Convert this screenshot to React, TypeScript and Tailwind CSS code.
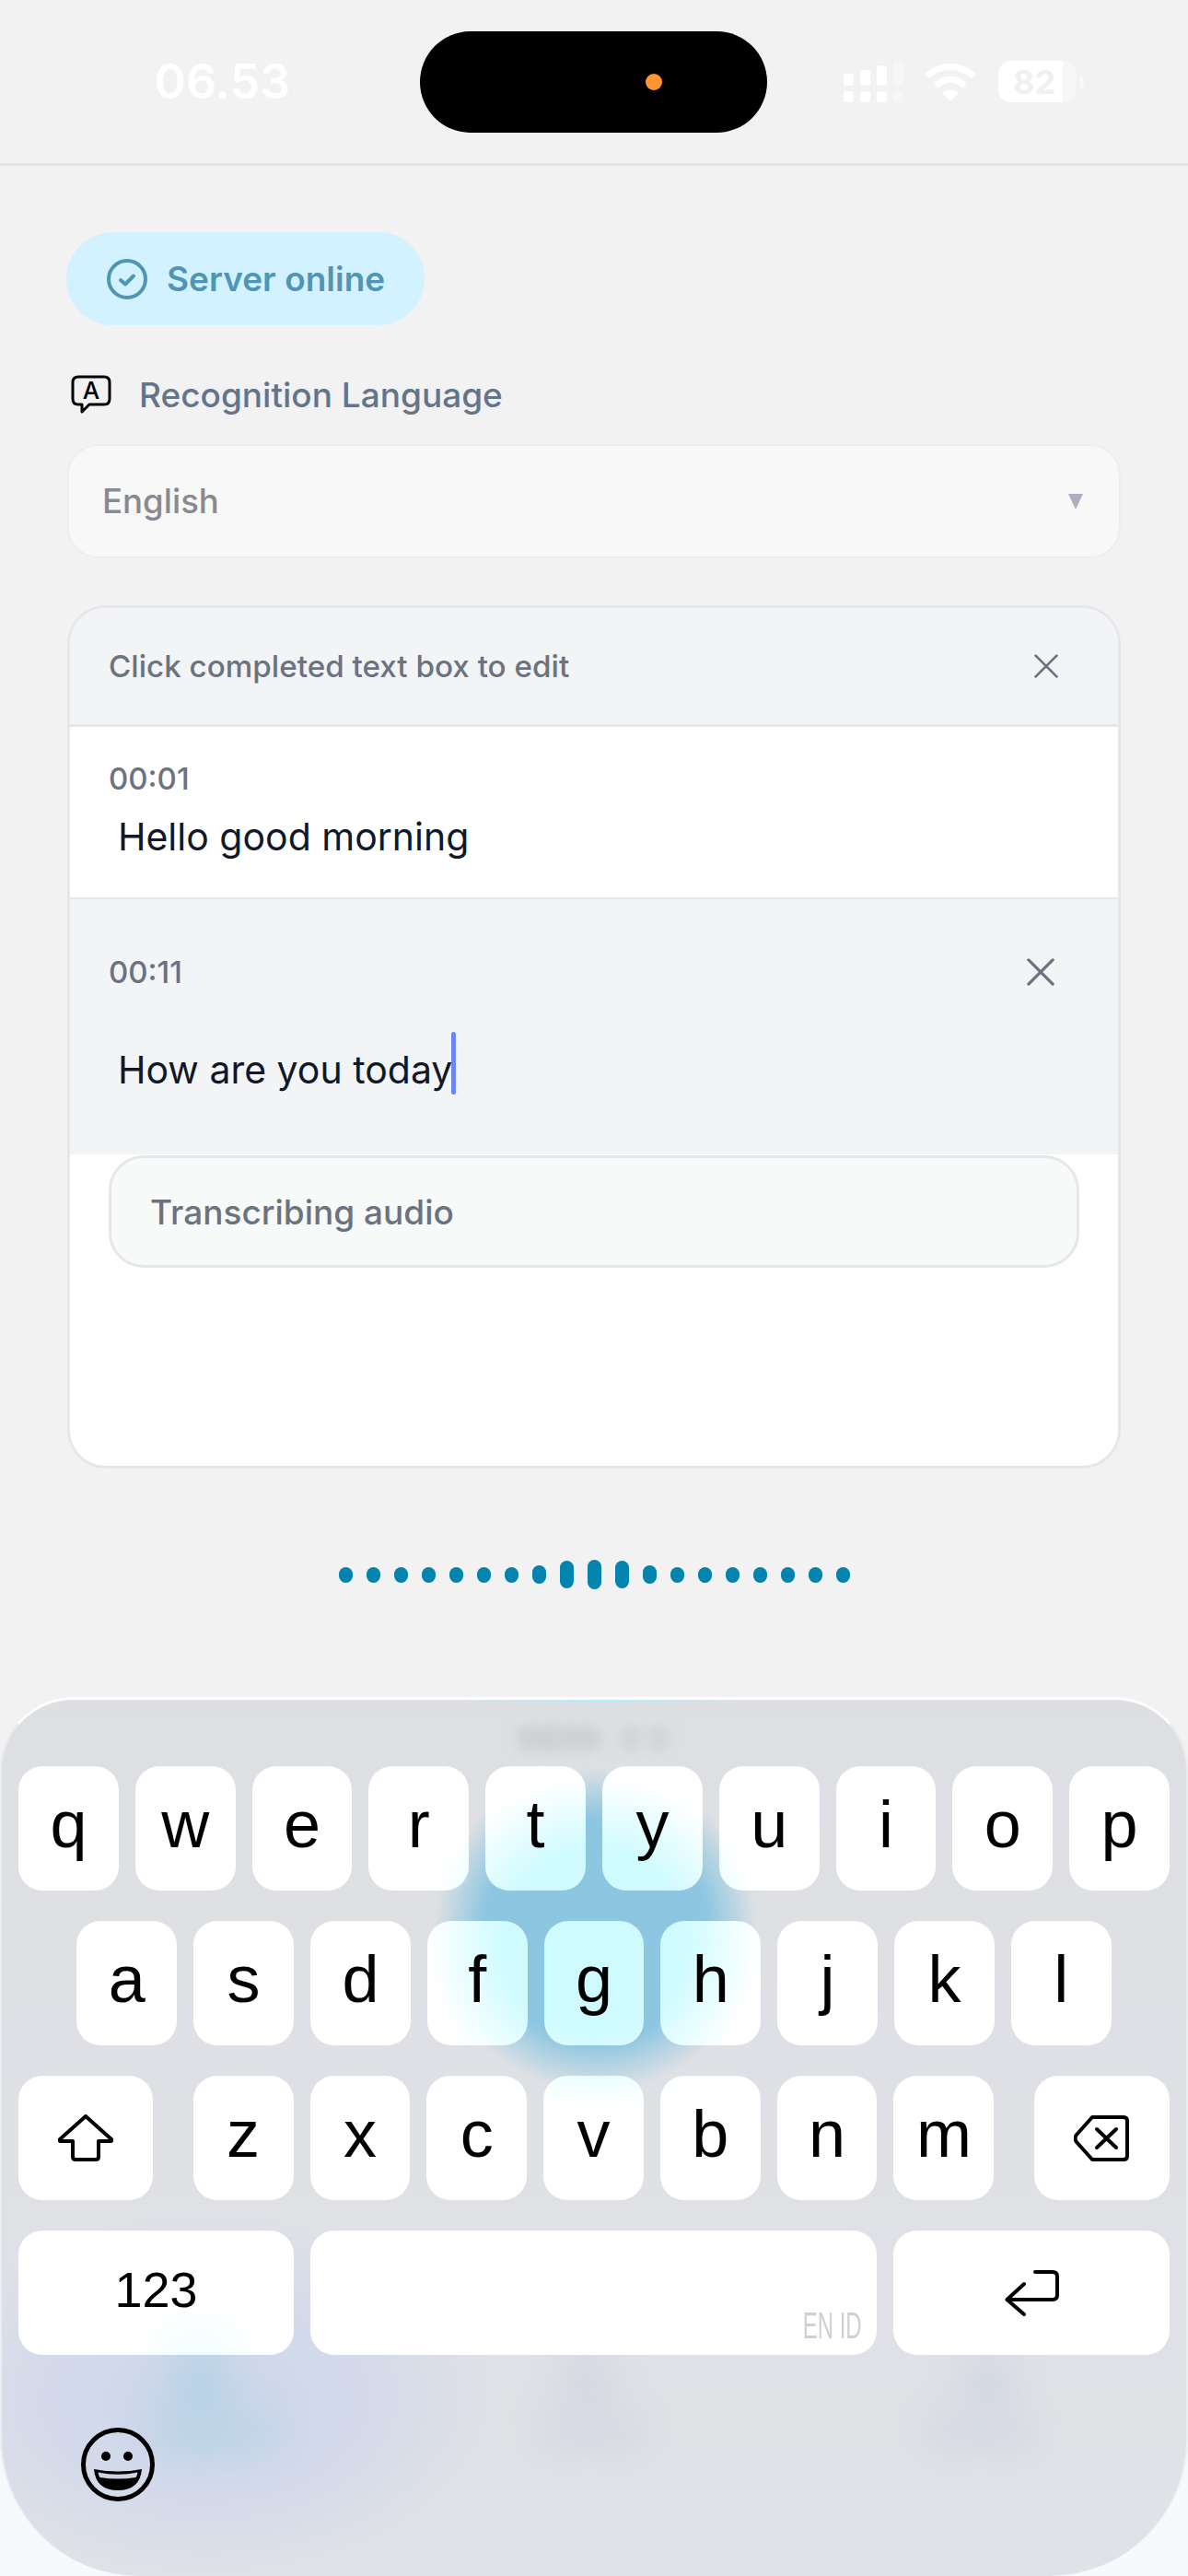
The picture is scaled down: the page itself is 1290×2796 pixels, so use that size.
import React from 'react';

const keyTint =
  'bg-white bg-fixed bg-[radial-gradient(circle_70px_at_215px_2570px,#eefdff_0%,#ffffff00_100%),radial-gradient(circle_180px_at_645px_2108px,#cffbff_55%,#ffffff_100%)]';

const dots = [17, 17, 17, 17, 17, 17, 17, 20, 30, 32, 30, 20, 17, 17, 17, 17, 17, 17, 17];

function Key({ label }: { label: string }) {
  return (
    <div className={`w-[108.8px] h-[135px] rounded-[26px] flex items-center justify-center pb-[10px] text-[72px] leading-none text-black font-['Liberation_Sans',sans-serif] ${keyTint}`}>
      {label}
    </div>
  );
}

function CloseIcon({ size, stroke }: { size: number; stroke: number }) {
  return (
    <svg width={size} height={size} viewBox="0 0 24 24" fill="none" stroke="#6b7280" strokeWidth={stroke} strokeLinecap="round">
      <path d="M1.5 1.5 22.5 22.5M22.5 1.5 1.5 22.5" />
    </svg>
  );
}

function SignalIcon() {
  return (
    <svg width="65" height="45" viewBox="0 0 65 45" fill="#fff">
      <rect x="0" y="14" width="11" height="13" rx="3" />
      <rect x="18" y="10" width="11" height="17" rx="3" />
      <rect x="36" y="5" width="11" height="22" rx="3" />
      <rect x="54" y="0" width="11" height="27" rx="3" opacity="0.3" />
      <rect x="0" y="33" width="11" height="12" rx="3" />
      <rect x="18" y="33" width="11" height="12" rx="3" />
      <rect x="36" y="33" width="11" height="12" rx="3" />
      <rect x="54" y="33" width="11" height="12" rx="3" opacity="0.3" />
    </svg>
  );
}

function WifiIcon() {
  return (
    <svg width="58" height="42" viewBox="0 0 58 42" fill="none">
      <path d="M3.5 15 C18 1, 40 1, 54.5 15" stroke="#fff" strokeWidth="7" />
      <path d="M13.5 25 C23 16, 35 16, 44.5 25" stroke="#fff" strokeWidth="7" />
      <path d="M20 33 C25 28, 33 28, 38 33 L29 42 Z" fill="#fff" />
    </svg>
  );
}

export default function App() {
  return (
    <div className="w-[1290px] h-[2796px] overflow-hidden flex flex-col bg-[#f2f2f2] font-['Inter',sans-serif]">
      {/* status bar */}
      <div className="h-[180px] shrink-0 border-b-[3px] border-[#e3e3e3] flex items-center">
        <div className="w-[456px] pl-[27px] text-center text-[52px] leading-none font-semibold text-white">06.53</div>
        <div className="w-[377px] h-[110px] rounded-full bg-black flex items-center justify-end pr-[114px]">
          <div className="w-[18px] h-[18px] rounded-full bg-[#ff9530]" />
        </div>
        <div className="ml-[83px] flex items-center">
          <SignalIcon />
          <div className="ml-[22px]">
            <WifiIcon />
          </div>
          <div className="ml-[23px] w-[85px] h-[45px] rounded-[14px] overflow-hidden relative bg-white/40 flex">
            <div className="w-[70px] bg-white" />
            <span className="absolute left-[16px] top-0 h-[45px] flex items-center text-[36px] leading-none font-bold text-[#f0f0f0]">82</span>
          </div>
          <div className="ml-[3px] w-[5px] h-[14px] rounded-r-full bg-white/50" />
        </div>
      </div>

      {/* content */}
      <div className="px-[74px] pt-[72px] flex flex-col">
        <div className="-ml-[2px] w-[389px] h-[101px] rounded-full bg-[#d3f2ff] flex items-center pl-[44px] gap-[21px] text-[#5096b4]">
          <svg width="44" height="44" viewBox="0 0 44 44" fill="none" stroke="#5096b4">
            <circle cx="22" cy="22" r="20" strokeWidth="4" />
            <path d="M15 23 20 27.5 29 18.5" strokeWidth="4" strokeLinecap="round" strokeLinejoin="round" />
          </svg>
          <span className="text-[37px] leading-none font-semibold">Server online</span>
        </div>

        <div className="mt-[54px] ml-[3px] h-[42px] flex items-center gap-[30px] text-[#64748b]">
          <svg width="44" height="42" viewBox="0 0 44 42" fill="none" stroke="#000" strokeWidth="3">
            <path d="M8 2 H36 Q42 2 42 8 V26 Q42 32 36 32 H20 L12 40 V32 H8 Q2 32 2 26 V8 Q2 2 8 2 Z" strokeLinejoin="round" />
            <text x="22" y="26" textAnchor="middle" fontSize="26" fontWeight="500" fill="#000" stroke="none" fontFamily="Inter, sans-serif">A</text>
          </svg>
          <span className="text-[37px] leading-none font-medium">Recognition Language</span>
        </div>

        <div className="mt-[33px] -mx-px h-[124px] rounded-[34px] bg-[#f8f8f8] border-2 border-[#eeeeee] flex items-center justify-between pl-[36px] pr-[39px]">
          <span className="text-[36.6px] leading-none font-medium text-[#8a8a8e]">English</span>
          <svg width="16" height="17" viewBox="0 0 16 17" fill="#a9afbb">
            <path d="M0 0H16L8 17Z" />
          </svg>
        </div>

        <div className="mt-[51px] -mx-px h-[937px] rounded-[42px] border-[3px] border-[#e5e7eb] bg-white overflow-hidden flex flex-col">
          <div className="h-[129px] shrink-0 bg-[#f3f4f6] border-b-[3px] border-[#e5e7eb] flex items-center justify-between pl-[42px] pr-[65px]">
            <span className="pt-[2px] text-[33.2px] leading-none font-medium text-[#6b7280]">Click completed text box to edit</span>
            <CloseIcon size={26} stroke={2.6} />
          </div>

          <div className="h-[187px] shrink-0 border-b-2 border-[#e5e7eb] pl-[42px] pt-[36px]">
            <div className="text-[33px] leading-[40px] font-medium text-[#6b7280]">00:01</div>
            <div className="mt-[15px] pl-[10px] text-[41px] leading-[56px] text-[#111827]">Hello good morning</div>
          </div>

          <div className="h-[277px] shrink-0 bg-[#f3f4f6] pl-[42px] pr-[69px] pt-[59px]">
            <div className="h-[40px] flex items-center justify-between">
              <span className="text-[33px] leading-[40px] font-medium text-[#6b7280]">00:11</span>
              <CloseIcon size={30} stroke={2.6} />
            </div>
            <div className="mt-[45px] pl-[10px] h-[68px] flex items-center text-[41px] leading-[56px] text-[#111827]">
              <span className="pt-[14px]">How are you today</span>
              <span className="-ml-px w-[5px] h-[68px] rounded-full bg-[#6b86ee]" />
            </div>
          </div>

          <div className="mt-[1px] mx-[42px] h-[122px] shrink-0 rounded-[38px] border-[3px] border-[#e5e7eb] bg-[#f8fafa] flex items-center pl-[42px] text-[37px] leading-none font-medium text-[#6b7280]">
            Transcribing audio
          </div>
        </div>

        <div className="mt-[99px] h-[32px] flex items-center justify-center gap-[15px]">
          {dots.map((h, i) => (
            <div key={i} className="w-[15px] rounded-full bg-[#0284ae]" style={{ height: h }} />
          ))}
        </div>
      </div>

      {/* keyboard */}
      <div className="mt-auto h-[954px] shrink-0 bg-[linear-gradient(to_bottom,#f2f2f2_0%,#f2f2f2_60%,#f7f9fc_90%)]">
        <div className="relative h-full rounded-t-[80px] rounded-b-[150px] border-t-[3px] border-x-2 border-t-white border-x-white/40 bg-[linear-gradient(to_bottom,#dddfe3,#e0e2e7)] overflow-hidden pt-[72px] px-[18px]">
          {/* light coming through the keyboard, sits behind the keys */}
          <div className="absolute left-[500px] top-0 w-[300px] h-[3px] bg-[linear-gradient(to_right,#a8f3fb00,#a8f3fb,#a8f3fb00)]" />
          <div className="absolute left-[450px] top-[55px] w-[390px] h-[390px] bg-[radial-gradient(circle_closest-side,#8cc6e0_0%,#8cc6e0_62%,#dee0e400_90%)]" />
          <div className="absolute left-[-100px] top-[560px] w-[640px] h-[400px] bg-[radial-gradient(closest-side,#cbd7ea_0%,#d4daea_55%,#dee0e400_100%)]" />
          <div className="absolute left-[185px] top-[700px] w-[60px] h-[110px] rounded-full bg-[#b9d3e6] blur-[18px]" />
          <div className="absolute left-[160px] top-[775px] w-[140px] h-[40px] rounded-full bg-[#bdd4e6] blur-[18px]" />
          <div className="absolute left-[605px] top-[700px] w-[60px] h-[90px] rounded-full bg-[#d6d9e2] blur-[18px]" />
          <div className="absolute left-[580px] top-[775px] w-[120px] h-[40px] rounded-full bg-[#d6d9e2] blur-[18px]" />
          <div className="absolute left-[1040px] top-[700px] w-[60px] h-[90px] rounded-full bg-[#d5d9e3] blur-[18px]" />
          <div className="absolute left-[1000px] top-[775px] w-[120px] h-[40px] rounded-full bg-[#d5d9e3] blur-[18px]" />
          <div className="absolute left-[558px] top-[28px] w-[52px] h-[28px] rounded-full bg-[#d0d1d5] blur-[6px]" />
          <div className="absolute left-[600px] top-[28px] w-[52px] h-[28px] rounded-full bg-[#d0d1d5] blur-[6px]" />
          <div className="absolute left-[672px] top-[28px] w-[22px] h-[28px] rounded-full bg-[#d3d4d8] blur-[6px]" />
          <div className="absolute left-[702px] top-[28px] w-[22px] h-[28px] rounded-full bg-[#d3d4d8] blur-[6px]" />

          <div className="relative flex flex-col gap-[33px]">
            <div className="flex gap-[18px]">
              {'qwertyuiop'.split('').map((k) => (
                <Key key={k} label={k} />
              ))}
            </div>
            <div className="flex justify-center gap-[18px]">
              {'asdfghjkl'.split('').map((k) => (
                <Key key={k} label={k} />
              ))}
            </div>
            <div className="flex justify-between">
              <div className={`w-[146px] h-[135px] rounded-[26px] flex items-center justify-center ${keyTint}`}>
                <svg width="60" height="51" viewBox="0 0 60 51" fill="none" stroke="#000" strokeWidth="4" strokeLinejoin="round">
                  <path d="M30 2 L58 27 Q59 29 57 29 H44 V46 Q44 49 41 49 H19 Q16 49 16 46 V29 H3 Q1 29 2 27 Z" />
                </svg>
              </div>
              <div className="flex gap-[18px]">
                {'zxcvbnm'.split('').map((k) => (
                  <Key key={k} label={k} />
                ))}
              </div>
              <div className={`w-[147px] h-[135px] rounded-[26px] flex items-center justify-center ${keyTint}`}>
                <svg width="60" height="50" viewBox="0 0 60 50" fill="none" stroke="#000" strokeWidth="4" strokeLinecap="round" strokeLinejoin="round">
                  <path d="M20 2 H54 Q58 2 58 6 V44 Q58 48 54 48 H20 L3 29 Q0 25 3 21 Z" />
                  <path d="M25 15 46 35M46 15 25 35" />
                </svg>
              </div>
            </div>
            <div className="flex gap-[18px]">
              <div className={`w-[299px] h-[135px] rounded-[26px] flex items-center justify-center pb-[8px] text-[54px] leading-none text-black font-['Liberation_Sans',sans-serif] ${keyTint}`}>
                123
              </div>
              <div className={`relative flex-1 h-[135px] rounded-[26px] ${keyTint}`}>
                <span className="absolute right-[16px] bottom-[12px] origin-right scale-x-[0.6] text-[40px] leading-none text-[#d0d0d0] font-['Liberation_Sans',sans-serif]">EN ID</span>
              </div>
              <div className={`w-[300px] h-[135px] rounded-[26px] flex items-center justify-center ${keyTint}`}>
                <svg width="59" height="50" viewBox="0 0 59 50" fill="none" stroke="#000" strokeWidth="4" strokeLinecap="round" strokeLinejoin="round">
                  <path d="M33 2 H52 Q57 2 57 7 V27 Q57 32 52 32 H3" />
                  <path d="M21 15 2.5 32 21 48" />
                </svg>
              </div>
            </div>
          </div>

          <svg className="relative mt-[79px] ml-[68px]" width="80" height="80" viewBox="0 0 80 80" fill="none">
            <circle cx="40" cy="40" r="37.5" stroke="#000" strokeWidth="5" />
            <circle cx="27" cy="31" r="5" fill="#000" />
            <circle cx="51" cy="31" r="5" fill="#000" />
            <path d="M14 45 Q40 50 66 45 Q64 68 40 68 Q16 68 14 45 Z" fill="#000" />
            <path d="M18.5 48.5 Q40 53 61.5 48.5 Q61 52 59.5 54 Q40 57 20.5 54 Q19 52 18.5 48.5 Z" fill="#cdd3e0" />
          </svg>
        </div>
      </div>
    </div>
  );
}
